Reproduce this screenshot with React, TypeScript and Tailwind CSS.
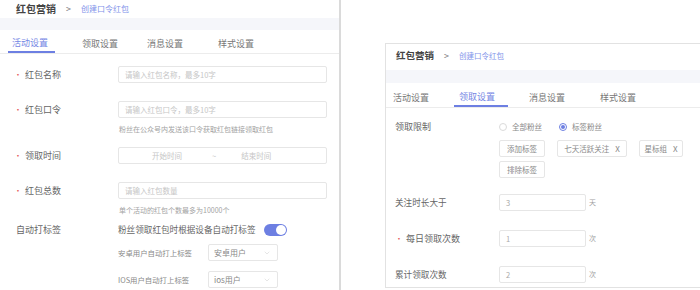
import React from 'react';
import { ChevronDown } from 'lucide-react';

const Dot = () => <span className="text-[#e5575a] mr-[3px] text-[8px]">•</span>;

const Field = ({ text, w, dark }: { text: string; w: string; dark?: boolean }) => (
  <div className={`${w} h-[17px] border border-[#e6e6e6] rounded-[2px] flex items-center px-[6px] text-[7.5px] ${dark ? 'text-[#a8a8a8]' : 'text-[#c6c6c6]'}`}>
    {text}
  </div>
);

const Select = ({ text }: { text: string }) => (
  <div className="w-[70px] h-[17px] border border-[#e6e6e6] rounded-[2px] flex items-center justify-between pl-[5px] pr-[6px] text-[8px] text-[#888]">
    <span>{text}</span>
    <ChevronDown size={8} strokeWidth={1.5} className="text-[#cccccc]" />
  </div>
);

const LeftPanel = () => (
  <div className="w-[341px] shrink-0 h-full border-r-2 border-[#dadada] overflow-hidden">
    <div className="h-[18px] flex items-center pl-[16px] gap-[10px]">
      <span className="text-[10px] font-bold text-[#444] leading-[12px]">红包营销</span>
      <span className="text-[9px] text-[#777] leading-[12px]">&gt;</span>
      <span className="text-[8px] text-[#8293ea] leading-[12px]">创建口令红包</span>
    </div>
    <div className="h-[12px] bg-[#f5f6fa]" />
    <div className="flex h-[24px] border-b border-[#ececec] pl-[8px] items-start">
      <div className="h-[23px] w-[47px] pl-[4px] pt-[4px] flex items-center border-b-2 border-[#6d7fe2] text-[9px] text-[#7586e4]">活动设置</div>
      <div className="ml-[27px] h-[23px] pt-[4px] flex items-center text-[9px] text-[#777]">领取设置</div>
      <div className="ml-[29px] h-[23px] pt-[4px] flex items-center text-[9px] text-[#777]">消息设置</div>
      <div className="ml-[35px] h-[23px] pt-[4px] flex items-center text-[9px] text-[#777]">样式设置</div>
    </div>

    <div className="flex items-center mt-[12px]">
      <div className="w-[118px] pl-[14px] text-[9px] text-[#666] flex items-center"><Dot />红包名称</div>
      <Field w="w-[209px]" text="请输入红包名称，最多10字" />
    </div>

    <div className="flex items-center mt-[18px]">
      <div className="w-[118px] pl-[14px] text-[9px] text-[#666] flex items-center"><Dot />红包口令</div>
      <Field w="w-[209px]" text="请输入红包口令，最多10字" />
    </div>
    <div className="mt-[5px] h-[12px] pl-[119px] text-[7px] text-[#a3a3a3] flex items-center">粉丝在公众号内发送该口令获取红包链接领取红包</div>

    <div className="flex items-center mt-[12px]">
      <div className="w-[118px] pl-[14px] text-[9px] text-[#666] flex items-center"><Dot />领取时间</div>
      <div className="w-[209px] h-[17px] border border-[#e6e6e6] rounded-[2px] flex items-center text-[7.5px] text-[#c6c6c6]">
        <span className="ml-[33px]">开始时间</span>
        <span className="ml-[30px]">~</span>
        <span className="ml-[25px]">结束时间</span>
      </div>
    </div>

    <div className="flex items-center mt-[18px]">
      <div className="w-[118px] pl-[14px] text-[9px] text-[#666] flex items-center"><Dot />红包总数</div>
      <Field w="w-[209px]" text="请输入红包数量" />
    </div>
    <div className="mt-[5px] h-[12px] pl-[119px] text-[7px] text-[#a3a3a3] flex items-center">单个活动的红包个数最多为10000个</div>

    <div className="flex items-center mt-[7px] h-[13px]">
      <div className="w-[118px] pl-[16px] text-[9px] text-[#666]">自动打标签</div>
      <span className="text-[8.6px] text-[#666]">粉丝领取红包时根据设备自动打标签</span>
      <div className="ml-[8px] w-[23px] h-[12px] rounded-full bg-[#6d7fe2] flex items-center justify-end pr-[1px]">
        <div className="w-[10px] h-[10px] rounded-full bg-white" />
      </div>
    </div>

    <div className="flex items-center mt-[8px]">
      <div className="w-[118px]" />
      <span className="w-[90px] text-[7.4px] text-[#888]">安卓用户自动打上标签</span>
      <Select text="安卓用户" />
    </div>
    <div className="flex items-center mt-[10px]">
      <div className="w-[118px]" />
      <span className="w-[90px] text-[7.4px] text-[#888]">IOS用户自动打上标签</span>
      <Select text="ios用户" />
    </div>
  </div>
);

const Radio = ({ checked, label }: { checked?: boolean; label: string }) => (
  <div className="flex items-center">
    <div className={`w-[8px] h-[8px] rounded-full border flex items-center justify-center ${checked ? 'border-[#6d7fe2]' : 'border-[#dadada]'}`}>
      {checked && <div className="w-[4px] h-[4px] rounded-full bg-[#6d7fe2]" />}
    </div>
    <span className="ml-[5px] text-[7.5px] text-[#888]">{label}</span>
  </div>
);

const Tag = ({ w, text, close }: { w: string; text: string; close?: boolean }) => (
  <div className={`${w} h-[17px] border border-[#e6e6e6] rounded-[2px] flex items-center justify-center text-[7.5px] text-[#888]`}>
    {text}
    {close && <span className="ml-[6px] text-[8px]">X</span>}
  </div>
);

const RightPanel = () => (
  <div className="flex-1 pt-[43px]">
    <div className="ml-[44px] h-[245px] border-l border-t border-b border-[#e2e2e2] overflow-hidden">
      <div className="h-[26px] flex items-center pb-[3px] pl-[10px] gap-[10px]">
        <span className="text-[9.5px] font-bold text-[#444]">红包营销</span>
        <span className="text-[9px] text-[#777]">&gt;</span>
        <span className="text-[7.5px] text-[#8293ea]">创建口令红包</span>
      </div>
      <div className="h-[13px] bg-[#f5f6fa]" />
      <div className="flex h-[25px] border-b border-[#ececec] pl-[7px] items-start">
        <div className="h-[24px] pt-[5px] flex items-center text-[9px] text-[#777]">活动设置</div>
        <div className="ml-[25px] h-[24px] w-[54px] pl-[5px] pt-[5px] flex items-center border-b-2 border-[#6d7fe2] text-[9px] text-[#7586e4]">领取设置</div>
        <div className="ml-[21px] h-[24px] pt-[5px] flex items-center text-[9px] text-[#777]">消息设置</div>
        <div className="ml-[35px] h-[24px] pt-[5px] flex items-center text-[9px] text-[#777]">样式设置</div>
      </div>

      <div className="flex mt-[12px]">
        <div className="w-[113px] pl-[9px] h-[14px] flex items-center text-[9px] text-[#666]">领取限制</div>
        <div>
          <div className="h-[14px] flex items-center gap-[17px]">
            <Radio label="全部粉丝" />
            <Radio checked label="标签粉丝" />
          </div>
          <div className="mt-[6px] flex gap-[12px]">
            <Tag w="w-[46px]" text="添加标签" />
            <Tag w="w-[70px]" text="七天活跃关注" close />
            <Tag w="w-[44px]" text="星标组" close />
          </div>
          <div className="mt-[4px] flex">
            <Tag w="w-[46px]" text="排除标签" />
          </div>
        </div>
      </div>

      <div className="flex items-center mt-[16px]">
        <div className="w-[113px] pl-[9px] text-[8.6px] text-[#666]">关注时长大于</div>
        <Field w="w-[87px]" dark text="3" />
        <span className="ml-[3px] text-[7px] text-[#a3a3a3]">天</span>
      </div>
      <div className="flex items-center mt-[19px]">
        <div className="w-[113px] pl-[9px] text-[9px] text-[#666] flex items-center"><Dot />每日领取次数</div>
        <Field w="w-[87px]" dark text="1" />
        <span className="ml-[3px] text-[7px] text-[#a3a3a3]">次</span>
      </div>
      <div className="flex items-center mt-[19px]">
        <div className="w-[113px] pl-[9px] text-[8.6px] text-[#666]">累计领取次数</div>
        <Field w="w-[87px]" dark text="2" />
        <span className="ml-[3px] text-[7px] text-[#a3a3a3]">次</span>
      </div>
    </div>
  </div>
);

export default function App() {
  return (
    <div className="w-[700px] h-[290px] bg-white flex overflow-hidden font-['Noto_Sans_CJK_SC',sans-serif]">
      <LeftPanel />
      <RightPanel />
    </div>
  );
}
